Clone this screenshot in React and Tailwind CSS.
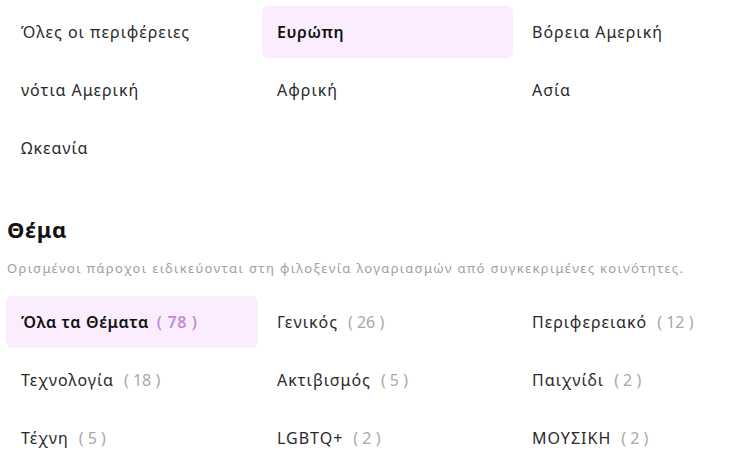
import React from "react";

const regions = [
  { label: "Όλες οι περιφέρειες" },
  { label: "Ευρώπη", active: true },
  { label: "Βόρεια Αμερική" },
  { label: "νότια Αμερική" },
  { label: "Αφρική" },
  { label: "Ασία" },
  { label: "Ωκεανία" },
];

const topics = [
  { label: "Όλα τα Θέματα", count: 78, active: true },
  { label: "Γενικός", count: 26 },
  { label: "Περιφερειακό", count: 12 },
  { label: "Τεχνολογία", count: 18 },
  { label: "Ακτιβισμός", count: 5 },
  { label: "Παιχνίδι", count: 2 },
  { label: "Τέχνη", count: 5 },
  { label: "LGBTQ+", count: 2 },
  { label: "ΜΟΥΣΙΚΗ", count: 2 },
];

function Item({ active, children }) {
  return (
    <div
      className={
        "h-[52px] flex items-center px-[15px] rounded-md text-[16px] " +
        (active
          ? "bg-[#fbedfd] font-semibold tracking-[0.6px] text-[#111]"
          : "tracking-[1px] text-[#2a2a2a]")
      }
    >
      {children}
    </div>
  );
}

export default function App() {
  return (
    <div
      className="w-[750px] h-[463px] overflow-hidden bg-white"
      style={{ fontFamily: '"Noto Sans", "Open Sans", sans-serif' }}
    >
      <div className="grid grid-cols-[252px_251px_251px] gap-x-1 gap-y-1.5 pl-1.5 pt-1.5">
        {regions.map((r) => (
          <Item key={r.label} active={r.active}>
            {r.label}
          </Item>
        ))}
      </div>
      <h2 className="mt-[41px] pl-[7px] text-[22px] leading-7 font-bold tracking-[0.6px] text-[#111]">
        Θέμα
      </h2>
      <p className="mt-[17px] pl-[7px] text-[13px] leading-4 tracking-[1.35px] text-[#a0a0a0]">
        Ορισμένοι πάροχοι ειδικεύονται στη φιλοξενία λογαριασμών από συγκεκριμένες κοινότητες.
      </p>
      <div className="mt-[20px] grid grid-cols-[252px_251px_251px] gap-x-1 gap-y-1.5 pl-1.5">
        {topics.map((t) => (
          <Item key={t.label} active={t.active}>
            <span>{t.label}</span>
            <span
              className={
                t.active
                  ? "ml-2 text-[#c58bd6] font-semibold"
                  : "ml-2.5 tracking-normal text-[#a8a8a8]"
              }
            >
              ( {t.count} )
            </span>
          </Item>
        ))}
      </div>
    </div>
  );
}
